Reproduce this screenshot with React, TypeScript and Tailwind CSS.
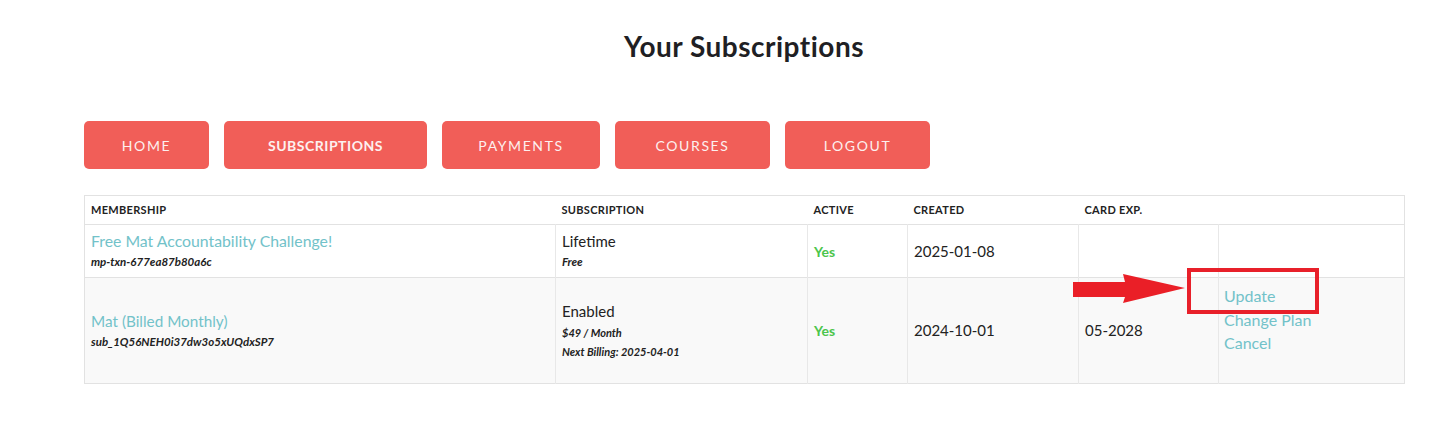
import React from "react";

const navs = [
  { label: "HOME", w: "w-[125px]", bold: false },
  { label: "SUBSCRIPTIONS", w: "w-[203px]", bold: true },
  { label: "PAYMENTS", w: "w-[158px]", bold: false },
  { label: "COURSES", w: "w-[155px]", bold: false },
  { label: "LOGOUT", w: "w-[145px]", bold: false },
];

export default function App() {
  return (
    <div className="w-[1433px] h-[435px] bg-white text-[#222] font-['Lato',sans-serif] relative">
      <div className="ml-[84px] w-[1320px] pt-[26px]">
        <h1 className="text-center text-[28px] font-bold leading-[40px] text-[#1f1f24] tracking-[0.5px]">
          Your Subscriptions
        </h1>
        <div className="mt-[55px] flex gap-[15px]">
          {navs.map((n) => (
            <div
              key={n.label}
              className={`${n.w} h-[48px] rounded-[5px] bg-[#f15e58] flex items-center justify-center text-[#fdf0ef] ${n.bold ? "font-bold tracking-[0.5px] text-[14px]" : "font-normal text-[14px] tracking-[1.6px]"}`}
            >
              {n.label}
            </div>
          ))}
        </div>
        <table className="mt-[26px] w-[1320px] border-collapse table-fixed border border-[#e2e2e2]">
          <colgroup>
            <col className="w-[471px]" />
            <col className="w-[252px]" />
            <col className="w-[100px]" />
            <col className="w-[171px]" />
            <col className="w-[140px]" />
            <col className="w-[186px]" />
          </colgroup>
          <thead>
            <tr className="h-[29px] border-b border-[#e2e2e2] text-left text-[11px] font-bold tracking-[0.3px] text-[#222]">
              <th className="px-[6px] font-bold">MEMBERSHIP</th>
              <th className="px-[6px] font-bold">SUBSCRIPTION</th>
              <th className="px-[6px] font-bold">ACTIVE</th>
              <th className="px-[6px] font-bold">CREATED</th>
              <th className="px-[6px] font-bold">CARD EXP.</th>
              <th className="px-[6px]"></th>
            </tr>
          </thead>
          <tbody className="text-[15px]">
            <tr className="h-[53px] border-b border-[#e2e2e2]">
              <td className="px-[6px] border-r border-[#e8e8e8] align-middle">
                <div className="text-[#72c2c9] text-[15.8px] leading-[20px]">Free Mat Accountability Challenge!</div>
                <div className="text-[11.5px] italic font-bold leading-[18px] mt-[2px]">mp-txn-677ea87b80a6c</div>
              </td>
              <td className="px-[6px] border-r border-[#e8e8e8]">
                <div className="leading-[20px]">Lifetime</div>
                <div className="text-[11.5px] italic font-bold leading-[18px] mt-[2px]">Free</div>
              </td>
              <td className="px-[6px] border-r border-[#e8e8e8] text-[#4cc54c] font-bold text-[14px]">Yes</td>
              <td className="px-[6px] border-r border-[#e8e8e8]">2025-01-08</td>
              <td className="px-[6px] border-r border-[#e8e8e8]"></td>
              <td className="px-[6px]"></td>
            </tr>
            <tr className="h-[106px] bg-[#f9f9f9]">
              <td className="px-[6px] border-r border-[#e8e8e8]">
                <div className="text-[#72c2c9] text-[15.3px] leading-[20px]">Mat (Billed Monthly)</div>
                <div className="text-[11.5px] italic font-bold leading-[18px] mt-[2px]">sub_1Q56NEH0i37dw3o5xUQdxSP7</div>
              </td>
              <td className="px-[6px] border-r border-[#e8e8e8]">
                <div className="leading-[20px]">Enabled</div>
                <div className="text-[11px] italic font-bold leading-[19px] mt-[2px]">$49 / Month</div>
                <div className="text-[11px] italic font-bold leading-[19px]">Next Billing: 2025-04-01</div>
              </td>
              <td className="px-[6px] border-r border-[#e8e8e8] text-[#4cc54c] font-bold text-[14px]">Yes</td>
              <td className="px-[6px] border-r border-[#e8e8e8]">2024-10-01</td>
              <td className="px-[6px] border-r border-[#e8e8e8]">05-2028</td>
              <td className="px-[5px] pb-[24px] text-[#72c2c9] text-[16px]">
                <div className="leading-[24px]">Update</div>
                <div className="leading-[23px]">Change Plan</div>
                <div className="leading-[23px]">Cancel</div>
              </td>
            </tr>
          </tbody>
        </table>
      </div>
      {/* annotation overlay */}
      <svg className="absolute left-[1070px] top-[270px]" width="120" height="40" viewBox="0 0 120 40">
        <polygon points="3,12 55,12 53,4 115,18 53,33 55,27 3,27" fill="#ea1f27" />
      </svg>
      <div className="absolute left-[1187px] top-[268px] w-[132px] h-[46px] border-[4px] border-[#e8202a]"></div>
    </div>
  );
}
